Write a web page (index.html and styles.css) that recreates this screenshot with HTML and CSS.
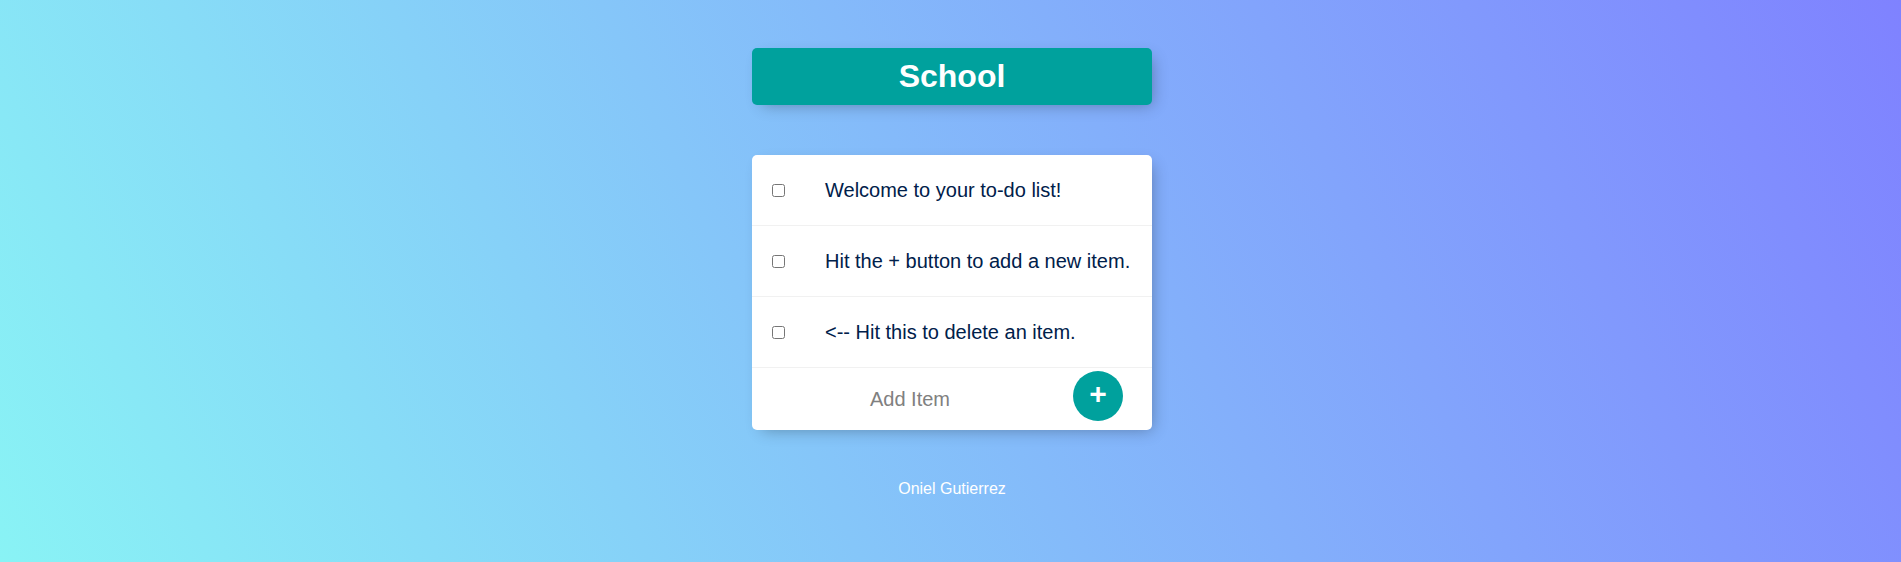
FILE: index.html
```html
<!DOCTYPE html>
<html lang="en">
<head>
<meta charset="utf-8">
<title>To-Do List</title>
<link rel="stylesheet" href="styles.css">
</head>
<body>
<div class="page">
  <div class="box heading">
    <h1>School</h1>
  </div>
  <div class="box list">
    <div class="item">
      <input type="checkbox" class="check">
      <p class="item-text">Welcome to your to-do list!</p>
    </div>
    <div class="item">
      <input type="checkbox" class="check">
      <p class="item-text">Hit the + button to add a new item.</p>
    </div>
    <div class="item">
      <input type="checkbox" class="check">
      <p class="item-text">&lt;-- Hit this to delete an item.</p>
    </div>
    <form class="add-form">
      <input type="text" class="add-input" name="newItem" placeholder="Add Item" autocomplete="off">
      <button type="button" class="add-btn">+</button>
    </form>
  </div>
  <footer class="footer">Oniel Gutierrez</footer>
</div>
</body>
</html>
```

FILE: styles.css
```css
html {
  min-height: 100%;
  background-color: #84b9f9;
  background-image: linear-gradient(65deg, #89f3f5 0%, #7f82ff 100%);
  font-family: "Liberation Sans", Arial, sans-serif;
}

body {
  margin: 0;
}

.page {
  padding: 48px 0 40px 3px;
}

.box {
  width: 400px;
  margin: 0 auto 50px;
  background: #ffffff;
  border-radius: 5px;
  box-shadow: 5px 5px 15px -5px rgba(0, 0, 0, 0.3);
}

.heading {
  background-color: #00a19d;
  text-align: center;
}

.heading h1 {
  margin: 0;
  padding: 10px;
  color: #ffffff;
  font-size: 32px;
  font-weight: bold;
}

.item {
  min-height: 70px;
  display: flex;
  align-items: center;
  border-bottom: 1px solid #f1f1f1;
}

.check {
  margin: 20px;
  width: 13px;
  height: 13px;
}

.item-text {
  margin: 0;
  padding: 20px;
  font-size: 20px;
  font-weight: 200;
  color: #00204a;
}

.add-form {
  display: flex;
  align-items: center;
  height: 62px;
  padding-left: 20px;
}

.add-input {
  width: 276px;
  height: 60px;
  padding: 0;
  border: none;
  background: transparent;
  text-align: center;
  font-family: "Liberation Sans", Arial, sans-serif;
  font-size: 20px;
  font-weight: 200;
  color: #00204a;
}

.add-input::placeholder {
  color: grey;
  opacity: 1;
}

.add-input:focus {
  outline: none;
}

.add-btn {
  width: 50px;
  height: 50px;
  margin: 0 0 6px 25px;
  padding: 0 0 4px;
  border: 0;
  border-radius: 50%;
  background-color: #00a19d;
  color: #ffffff;
  font-family: "Liberation Sans", Arial, sans-serif;
  font-size: 30px;
  line-height: 1;
  font-weight: bold;
}

.footer {
  text-align: center;
  color: #ffffff;
  font-size: 16px;
}
```
